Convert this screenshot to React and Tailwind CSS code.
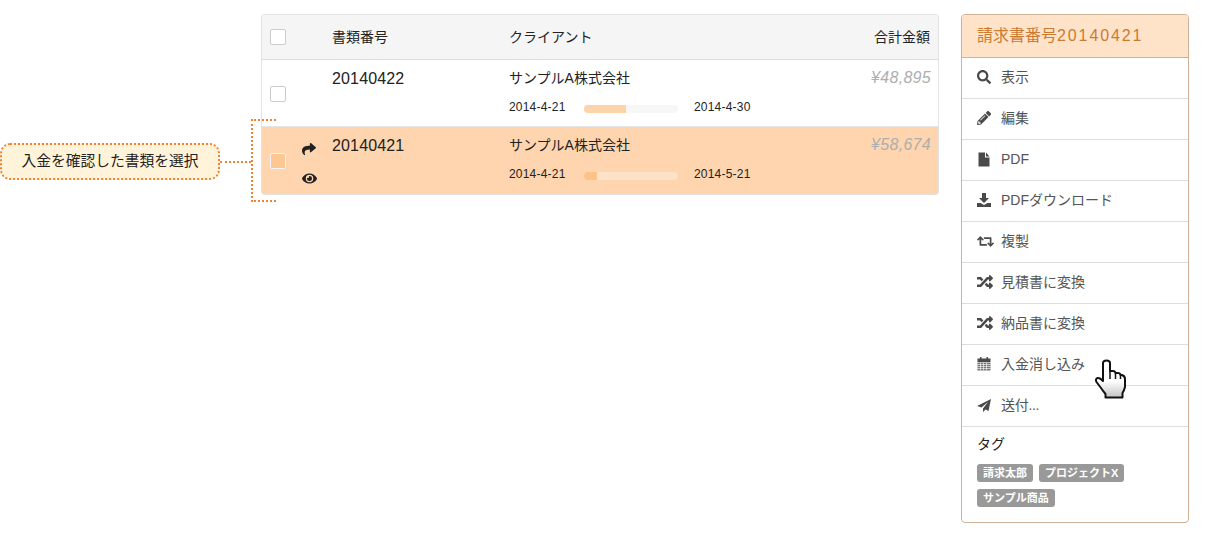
import React from "react";
import { FaSearch, FaPencilAlt, FaRetweet, FaRandom, FaShare, FaEye } from "react-icons/fa";

function FileIcon() {
  return (
    <svg width="14" height="15" viewBox="0 0 14 15" fill="currentColor">
      <path d="M1.500 0.500 H8 V5.500 H12.500 V14.500 H1.500 Z" />
      <path d="M9 0.500 L12.500 4.500 H9 Z" />
    </svg>
  );
}

function DownloadIcon() {
  return (
    <svg width="14" height="14" viewBox="0 0 14 14" fill="currentColor">
      <path d="M5 0 H9 V5 H12 L7 10 L2 5 H5 Z" />
      <path d="M0 10 H3.500 L7 12 L10.500 10 H14 V14 H0 Z" />
    </svg>
  );
}

function CalendarIcon() {
  return (
    <svg width="14" height="14" viewBox="0 0 14 14" fill="currentColor">
      <path d="M0.500 1.500 H13.500 V5 H0.500 Z" />
      <path d="M3 0 H4.500 V2 H3 Z M9.500 0 H11 V2 H9.500 Z" />
      <path d="M0.500 5.500 H13.500 V13.500 H0.500 Z" opacity="0.75" />
      <path d="M0.500 7.500 H13.500 M0.500 9.500 H13.500 M0.500 11.500 H13.500 M3.500 5.500 V13.500 M6.500 5.500 V13.500 M9.500 5.500 V13.500" stroke="#ffffff" strokeWidth="0.6" fill="none" />
    </svg>
  );
}

function SendIcon() {
  return (
    <svg width="14" height="14" viewBox="0 0 14 14" fill="currentColor">
      <path d="M14 1 L0 8 L4.500 9.500 L11 4 L6 10.500 V14 L8.500 11.500 L11.500 13 Z" />
    </svg>
  );
}

function Hand() {
  return (
    <svg width="34" height="42" viewBox="0 0 34 42" className="absolute left-[1093px] top-[358px]">
      <defs>
        <linearGradient id="palm" x1="0" y1="0" x2="0" y2="1">
          <stop offset="0.55" stopColor="#ffffff" />
          <stop offset="1" stopColor="#c4c4c4" />
        </linearGradient>
      </defs>
      <path d="M10 5 Q10 2.500 13.500 2.500 Q17 2.500 17 5 L17 13 L20 13 Q22 13 22.500 15 L25 15 Q27 15 27.500 17 L29 17 Q32 18 32 21 L32 29 Q31 33 29.500 35 L29.500 39.500 L12.500 39.500 L12.500 36 Q10 33 8 30 L3.500 24 Q2 21 4.500 20 Q7 19.500 10 23 Z" fill="url(#palm)" stroke="#111" strokeWidth="2" strokeLinejoin="round" />
      <path d="M17 13 V21 M22.500 15 V21 M27.500 17 V21" stroke="#111" strokeWidth="1.500" fill="none" />
    </svg>
  );
}

function Check({ active }) {
  return <div className={`w-4 h-4 rounded-[2px] border ${active ? "bg-[#fdc792] border-[#f3f3f3]" : "bg-white border-[#cccccc]"}`} />;
}

function Row({ num, amount, end, pct, active }) {
  return (
    <div className={`flex h-[67px] ${active ? "bg-[#fed5ae]" : "bg-white border-b border-[#e5e5e5]"}`}>
      <div className="w-[70px] pl-[8px] flex items-center gap-[16px]">
        <div className={active ? "" : "mt-[2px]"}><Check active={active} /></div>
        {active && (
          <div className="flex flex-col gap-[15px] text-[#222] text-[15px] pt-[6px] ml-[-0.500px]">
            <FaShare className="text-[14px]" />
            <FaEye />
          </div>
        )}
      </div>
      <div className="w-[177px] pt-[8px] text-[16px] tracking-[0.15px] leading-[22px] text-[#222]">{num}</div>
      <div className="flex-1 pt-[7px]">
        <div className="text-[14px] leading-[22px] text-[#222]">サンプルA株式会社</div>
        <div className="flex items-center mt-[10px] text-[12px] tracking-[0.2px] leading-[16px] text-[#222]">
          <span className="w-[75px]">2014-4-21</span>
          <div className={`w-[94px] h-[8px] mt-[3px] rounded-full overflow-hidden ${active ? "bg-[#fbe2c9]" : "bg-[#f7f7f7]"}`}>
            <div className={`h-full ${active ? "bg-[#fdc28a]" : "bg-[#fdd3a9]"}`} style={{ width: pct + "%" }} />
          </div>
          <span className="ml-[16px]">{end}</span>
        </div>
      </div>
      <div className="pt-[7px] pr-[7px] text-[16px] tracking-[0.3px] leading-[22px] italic text-[#aeaeae]">{amount}</div>
    </div>
  );
}

const items = [
  [FaSearch, "表示", 14],
  [FaPencilAlt, "編集", 14],
  [FileIcon, "PDF", 15],
  [DownloadIcon, "PDFダウンロード", 14],
  [FaRetweet, "複製", 17],
  [FaRandom, "見積書に変換", 16],
  [FaRandom, "納品書に変換", 16],
  [CalendarIcon, "入金消し込み", 14],
  [SendIcon, "送付...", 14],
];

export default function App() {
  return (
    <div
      className="relative w-[1206px] h-[538px] bg-white overflow-hidden flex items-start pt-[14px]"
      style={{ fontFamily: '"Liberation Sans", "Noto Sans CJK JP", sans-serif' }}
    >
      <div className="w-[261px] shrink-0 pt-[129px] flex items-center">
        <div className="w-[220px] h-[37px] rounded-[10px] border-2 border-dotted border-[#f58233] bg-[#fff3d9] flex items-center justify-center text-[14.750px] text-[#222]">
          入金を確認した書類を選択
        </div>
        <div className="w-[31px] border-t-2 border-dotted border-[#f58233]" />
      </div>

      <div className="w-[678px] shrink-0 rounded-[3px] border border-[#e3e3e3] overflow-hidden">
        <div className="flex items-center h-[45px] bg-[#f5f5f5] border-b border-[#dddddd] text-[14px] text-[#222]">
          <div className="w-[70px] pl-[8px]"><Check /></div>
          <div className="w-[177px]">書類番号</div>
          <div className="flex-1">クライアント</div>
          <div className="pr-[8px]">合計金額</div>
        </div>
        <Row num="20140422" amount="¥48,895" end="2014-4-30" pct={45} />
        <Row num="20140421" amount="¥58,674" end="2014-5-21" pct={14} active />
      </div>

      <div className="w-[228px] shrink-0 ml-[22px] h-[509px] rounded-[4px] border border-[#cfb198] overflow-hidden bg-white">
        <div className="h-[43px] bg-[#ffe3c9] border-b border-[#cfb198] pl-[15px] flex items-center text-[16px] text-[#cb7a32]">
          <span>請求書番号</span>
          <span className="tracking-[1.9px]">20140421</span>
        </div>
        {items.map(([Icon, label, size], i) => (
          <div key={i} className="h-[41px] border-b border-[#dddddd] flex items-center text-[14px] text-[#555555] pb-[2px]">
            <div className="w-[39px] pl-[15px] shrink-0 text-[#4a4a4a]"><Icon style={{ fontSize: size }} /></div>
            <span className={i === 8 ? "tracking-[-0.3px]" : ""}>{label}</span>
          </div>
        ))}
        <div className="pl-[15px] pt-[7px]">
          <div className="text-[14px] leading-[20px] text-[#222]">タグ</div>
          <div className="flex flex-wrap gap-x-[6px] gap-y-[7px] mt-[10px] w-[170px]">
            {["請求太郎", "プロジェクトX", "サンプル商品"].map((t) => (
              <span key={t} className="h-[18px] px-[6px] rounded-[3px] bg-[#999999] text-white text-[11px] font-bold flex items-center">{t}</span>
            ))}
          </div>
        </div>
      </div>

      <div className="absolute left-[251px] top-[119px] w-[25px] h-[83px] border-l-2 border-t-2 border-b-2 border-dotted border-[#f58233]" />
      <Hand />
    </div>
  );
}
